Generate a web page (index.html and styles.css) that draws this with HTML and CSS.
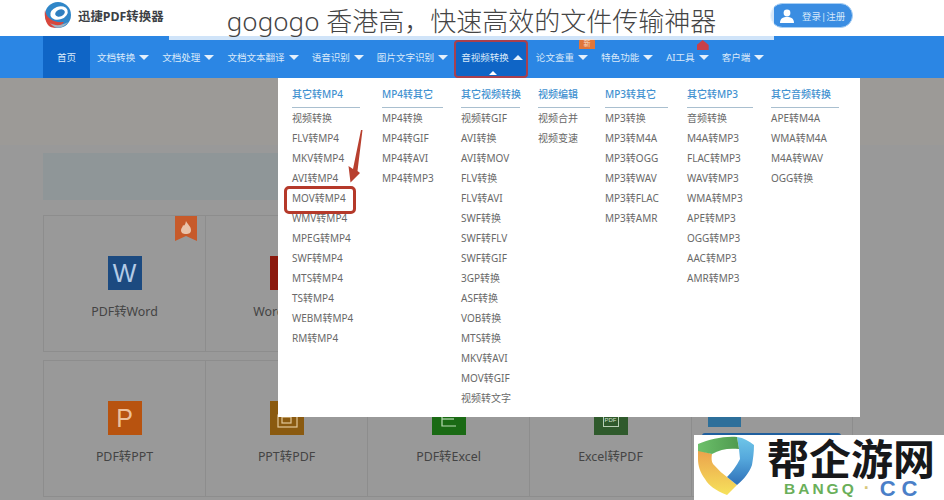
FILE: index.html
```html
<!doctype html>
<html lang="zh-CN">
<head>
    <meta charset="utf-8"/>
    <title>迅捷PDF转换器</title>
    <link rel="stylesheet" href="styles.css">
</head>

<body>
    <div class="head">
        <svg class="logo" width="30" height="28" viewBox="0 0 30 28">
            <circle cx="15" cy="13" r="13" fill="#2f86c8"/>
            <ellipse cx="16" cy="11" rx="9" ry="6.5" fill="#fff" transform="rotate(-20 16 11)"/>
            <ellipse cx="17" cy="11" rx="5" ry="3.4" fill="#2f7fc0" transform="rotate(-20 17 11)"/>
            <path d="M2 8C3 16 10 21 21 20C17 26 10 27 6 24C3 21 1 15 2 8Z" fill="#d8473c"/>
            <path d="M7 21C12 24 18 24 25 20C20 27 12 28 7 21Z" fill="#9fb4c4"/>
        </svg>
        <span class="brand">迅捷PDF转换器</span>
        <a class="login">
            <svg width="14" height="14" viewBox="0 0 14 14">
                <circle cx="7" cy="4" r="3.4" fill="#fff"/>
                <path d="M0 14C0 9.5 3 8 7 8S14 9.5 14 14Z" fill="#fff"/>
            </svg>
            登录|注册
        </a>
    </div>

    <ul class="nav">
        <li class="home">首页</li>
        <li>文档转换<i></i></li>
        <li>文档处理<i></i></li>
        <li>文档文本翻译<i></i></li>
        <li>语音识别<i></i></li>
        <li>图片文字识别<i></i></li>
        <li class="open">音视频转换<i></i></li>
        <li>论文查重<i></i><b class="tag-new">新</b></li>
        <li>特色功能<i></i></li>
        <li>AI工具<i></i><b class="tag-hot"></b></li>
        <li>客户端<i></i></li>
    </ul>

    <div class="main">
        <div class="band"></div>
        <div class="wrap">
            <div class="bar"></div>
            <div class="cards">
                <div class="card">
                    <svg class="ribbon" width="22" height="25" viewBox="0 0 22 25">
                        <path d="M0 0H22V25L11 20L0 25Z" fill="#c75a2a"/>
                        <path d="M11 5C12 8 16 10 16 14C16 17 14 18 11 18S6 17 6 14C6 12 8 11 8 9C9 10 10 10 11 5Z" fill="#e9c3aa"/>
                    </svg>
                    <div class="ico blue">W</div>
                    <p>PDF转Word</p>
                </div>
                <div class="card">
                    <div class="ico red"></div>
                    <p>Word转PDF</p>
                </div>
                <div class="card"></div>
                <div class="card"></div>
                <div class="card"></div>

                <div class="card">
                    <div class="ico orange">P</div>
                    <p>PDF转PPT</p>
                </div>
                <div class="card">
                    <div class="ico brown">
                        <svg width="34" height="34" viewBox="0 0 34 34" fill="none" stroke="#e3c89a" stroke-width="1.2">
                            <rect x="8" y="14" width="19" height="12"/>
                            <rect x="12" y="16" width="9" height="6"/>
                        </svg>
                    </div>
                    <p>PPT转PDF</p>
                </div>
                <div class="card">
                    <div class="ico green">
                        <svg width="34" height="34" viewBox="0 0 34 34" fill="none" stroke="#b9dcb4" stroke-width="1.2">
                            <path d="M24 12H10V25H24"/>
                            <path d="M10 18H22"/>
                        </svg>
                    </div>
                    <p>PDF转Excel</p>
                </div>
                <div class="card">
                    <div class="ico moss"><span class="pdf-box">PDF</span></div>
                    <p>Excel转PDF</p>
                </div>
                <div class="card last">
                    <div class="mini"></div>
                    <div class="strip"></div>
                </div>
            </div>
        </div>
    </div>

    <!-- 下拉菜单 -->
    <div class="menu">
        <div class="col c1">
            <h4>其它转MP4</h4>
            <a>视频转换</a><a>FLV转MP4</a><a>MKV转MP4</a><a>AVI转MP4</a>
            <a class="mark">MOV转MP4</a>
            <a>WMV转MP4</a><a>MPEG转MP4</a><a>SWF转MP4</a><a>MTS转MP4</a><a>TS转MP4</a><a>WEBM转MP4</a><a>RM转MP4</a>
        </div>
        <div class="col c2">
            <h4>MP4转其它</h4>
            <a>MP4转换</a><a>MP4转GIF</a><a>MP4转AVI</a><a>MP4转MP3</a>
        </div>
        <div class="col c3">
            <h4>其它视频转换</h4>
            <a>视频转GIF</a><a>AVI转换</a><a>AVI转MOV</a><a>FLV转换</a><a>FLV转AVI</a><a>SWF转换</a><a>SWF转FLV</a><a>SWF转GIF</a>
            <a>3GP转换</a><a>ASF转换</a><a>VOB转换</a><a>MTS转换</a><a>MKV转AVI</a><a>MOV转GIF</a><a>视频转文字</a>
        </div>
        <div class="col c4">
            <h4>视频编辑</h4>
            <a>视频合并</a><a>视频变速</a>
        </div>
        <div class="col c5">
            <h4>MP3转其它</h4>
            <a>MP3转换</a><a>MP3转M4A</a><a>MP3转OGG</a><a>MP3转WAV</a><a>MP3转FLAC</a><a>MP3转AMR</a>
        </div>
        <div class="col c6">
            <h4>其它转MP3</h4>
            <a>音频转换</a><a>M4A转MP3</a><a>FLAC转MP3</a><a>WAV转MP3</a><a>WMA转MP3</a><a>APE转MP3</a><a>OGG转MP3</a><a>AAC转MP3</a><a>AMR转MP3</a>
        </div>
        <div class="col c7">
            <h4>其它音频转换</h4>
            <a>APE转M4A</a><a>WMA转M4A</a><a>M4A转WAV</a><a>OGG转换</a>
        </div>
        <svg class="arrow" width="20" height="56" viewBox="0 0 20 56">
            <path d="M15 0L16.5 0L11.5 41L14 43L4.5 52.5L2.5 36L7 39Z" fill="#b8402f"/>
        </svg>
    </div>

    <div class="caption">gogogo 香港高，快速高效的文件传输神器</div>

    <div class="stamp">
        <svg class="shield" width="58" height="60" viewBox="0 0 58 60">
            <defs>
                <linearGradient id="left-band" x1="0" y1="0" x2="0" y2="1">
                    <stop offset="0" stop-color="#eba14c"/>
                    <stop offset="1" stop-color="#f6e25c"/>
                </linearGradient>
                <linearGradient id="right-band" x1="0" y1="0" x2="0" y2="1">
                    <stop offset="0" stop-color="#6fc6e8"/>
                    <stop offset=".45" stop-color="#55a8dc"/>
                    <stop offset="1" stop-color="#2f70b8"/>
                </linearGradient>
                <linearGradient id="top-band" x1="0" y1="0" x2="1" y2="0">
                    <stop offset="0" stop-color="#6cc06a"/>
                    <stop offset="1" stop-color="#4f9a50"/>
                </linearGradient>
            </defs>
            <path d="M1 14L15 18C14 24 15 27 17 29Q23 36 30 41L40 49L30 59C18 54 12 50 8 43C3 36 1 30 1 23Z" fill="url(#left-band)"/>
            <path d="M40 1C47 2 52 5 57 9C57 16 56 23 55 29C52 37 47 43 40 49L30 41Q38 33 43 23L42 13Z" fill="url(#right-band)"/>
            <path d="M1 8C13 3 27 0 40 1L42 13C32 12 23 13 15 18L1 15Z" fill="url(#top-band)"/>
        </svg>
        <div>
            <div class="stamp-name">帮企游网</div>
            <div class="stamp-url"><span class="g">BANGQ</span><span class="dot">·</span><span class="b">CC</span></div>
        </div>
    </div>
</body>
</html>
```

FILE: styles.css
```css
* {
    padding: 0;
    margin: 0;
    list-style: none;
    box-sizing: border-box;
}

body {
    width: 944px;
    height: 500px;
    overflow: hidden;
    position: relative;
    background: #fff;
    font-family: "Noto Sans", "Noto Sans CJK SC", sans-serif;
}

.head {
    height: 36px;
    padding: 2px 91px 0 43px;
    display: flex;
    align-items: flex-start;
    background: #fff;
}

.brand {
    margin: 6px 0 0 5px;
    font-size: 12.4px;
    line-height: 18px;
    font-weight: 700;
    color: #3c3f45;
}

.login {
    margin: 1px 0 0 auto;
    width: 83px;
    height: 25px;
    display: flex;
    align-items: center;
    gap: 8px;
    padding-left: 9px;
    border: 1px solid #a9d0f5;
    border-radius: 13px;
    background: #3a8de2;
    font-size: 9.5px;
    color: #d6e8fa;
}

.nav {
    height: 42px;
    padding-left: 43px;
    display: flex;
    align-items: center;
    gap: 13px;
    background: #2b86e4;
    font-size: 9.55px;
    color: #d9e9fa;
}

.nav li {
    position: relative;
    display: flex;
    align-items: center;
    gap: 4px;
    height: 42px;
    white-space: nowrap;
}

.nav li i {
    width: 0;
    height: 0;
    border: 5px solid transparent;
    border-top: 5px solid #e4f0fc;
    border-bottom: 0;
}

.nav .home {
    width: 47px;
    margin-right: -6px;
    justify-content: center;
    background: #0f65c6;
}

.nav .open {
    isolation: isolate;
}

.nav .open::before {
    content: "";
    position: absolute;
    left: -7px;
    right: -5px;
    top: 4px;
    bottom: 0;
    z-index: -1;
    background: #0f65c6;
    border: 2px solid #a8404e;
    border-radius: 4px;
}

.nav .open::after {
    content: "";
    position: absolute;
    left: 28px;
    bottom: 3px;
    border: 4px solid transparent;
    border-bottom: 4px solid #fff;
    border-top: 0;
}

.nav .open i {
    border-top: 0;
    border-bottom: 5px solid #e4f0fc;
}

.tag-new {
    position: absolute;
    right: -7px;
    top: 3px;
    width: 16px;
    height: 10px;
    background: #e0763a;
    border-radius: 2px 2px 0 0;
    font-size: 7px;
    line-height: 10px;
    font-weight: 400;
    text-align: center;
    color: #f6dcc8;
}

.tag-hot {
    position: absolute;
    right: 0;
    top: 4px;
    width: 12px;
    height: 10px;
    background: #c8404a;
    clip-path: polygon(50% 0, 100% 50%, 100% 100%, 0 100%, 0 50%);
}

.main {
    height: 422px;
    background: #999;
}

.band {
    height: 67px;
    background: #9c9a97;
}

.wrap {
    padding: 8px 0 0 43px;
}

.bar {
    width: 810px;
    height: 47px;
    margin-bottom: 15px;
    background: #8f9698;
}

.cards {
    display: grid;
    grid-template-columns: repeat(5, 162px);
    grid-auto-rows: 137px;
    row-gap: 8px;
}

.card {
    position: relative;
    padding-top: 40px;
    display: flex;
    flex-direction: column;
    align-items: center;
    border: 1px solid #8d8d8d;
    border-right: 0;
}

.card:nth-child(5n) {
    border-right: 1px solid #8d8d8d;
}

.card p {
    margin-top: 12px;
    font-size: 12.4px;
    line-height: 20px;
    color: #444;
}

.ico {
    width: 34px;
    height: 34px;
    font-size: 25px;
    line-height: 34px;
    text-align: center;
    font-family: "Liberation Sans", sans-serif;
}

.blue { background: #1c4a80; color: #b4cbe6; }
.red { background: #8b1a0e; }
.orange { background: #b8530f; color: #ecc09c; }
.brown { background: #8a5a10; }
.green { background: #1a6a14; }
.moss { background: #2f5a2c; }

.pdf-box {
    display: block;
    width: 16px;
    height: 14px;
    margin: 12px auto 0;
    border: 1px solid #b7ceb4;
    font-size: 6px;
    line-height: 12px;
    color: #cfe0cc;
}

.ribbon {
    position: absolute;
    right: 8px;
    top: 0;
}

.last {
    padding-top: 16px;
    align-items: flex-start;
}

.mini {
    width: 33px;
    height: 50px;
    margin-left: 16px;
    background: #2d6f9a;
}

.strip {
    width: 139px;
    height: 20px;
    margin: 6px 0 0 10px;
    background: #1f5f9e;
    border-radius: 3px 3px 0 0;
}

.menu {
    position: absolute;
    left: 278px;
    top: 78px;
    width: 582px;
    height: 339px;
    padding: 8px 0 0 14px;
    display: flex;
    align-items: flex-start;
    background: #fff;
}

.col {
    flex: none;
}

.c1 { width: 68px; margin-right: 22px; }
.c2 { width: 61px; margin-right: 18px; }
.c3 { width: 59px; margin-right: 18px; }
.c4 { width: 52px; margin-right: 15px; }
.c5 { width: 63px; margin-right: 19px; }
.c6 { width: 66px; margin-right: 18px; }
.c7 { width: 68px; }

.col h4 {
    height: 22px;
    border-bottom: 1px solid #a9bfcf;
    font-size: 10px;
    line-height: 17px;
    font-weight: 500;
    color: #3f91d0;
    white-space: nowrap;
}

.col a {
    display: block;
    height: 20px;
    font-size: 10px;
    line-height: 20px;
    color: #696969;
    white-space: nowrap;
}

.mark {
    position: relative;
}

.mark::after {
    content: "";
    position: absolute;
    left: -8px;
    right: 4px;
    top: -2px;
    bottom: -6px;
    border: 3px solid #b5392a;
    border-radius: 5px;
}

.arrow {
    position: absolute;
    left: 68px;
    top: 52px;
}

.caption {
    position: absolute;
    left: 169px;
    top: 0;
    width: 605px;
    height: 40px;
    background: rgba(255, 255, 255, 0.78);
    text-align: center;
    font-size: 26px;
    line-height: 42px;
    font-weight: 300;
    color: #444;
    white-space: nowrap;
}

.stamp {
    position: absolute;
    left: 694px;
    top: 435px;
    width: 250px;
    height: 65px;
    padding-left: 3px;
    display: flex;
    gap: 12px;
    background: #fff;
}

.shield {
    margin-top: 1px;
}

.stamp-name {
    height: 44px;
    font-family: "Noto Sans CJK SC", sans-serif;
    font-size: 42px;
    line-height: 44px;
    font-weight: 700;
    color: #17181a;
    white-space: nowrap;
}

.stamp-url {
    display: flex;
    align-items: center;
    height: 17px;
    margin: 1px 0 0 17px;
    font-family: "Liberation Sans", sans-serif;
    font-weight: 700;
    line-height: 17px;
}

.stamp-url .g {
    font-size: 15.5px;
    letter-spacing: 3px;
    color: #6aaf5a;
}

.stamp-url .dot {
    margin: 0 10px 0 7px;
    font-size: 18px;
    color: #d8c77a;
}

.stamp-url .b {
    font-size: 22px;
    letter-spacing: 6px;
    color: #4a7fc8;
}
```
